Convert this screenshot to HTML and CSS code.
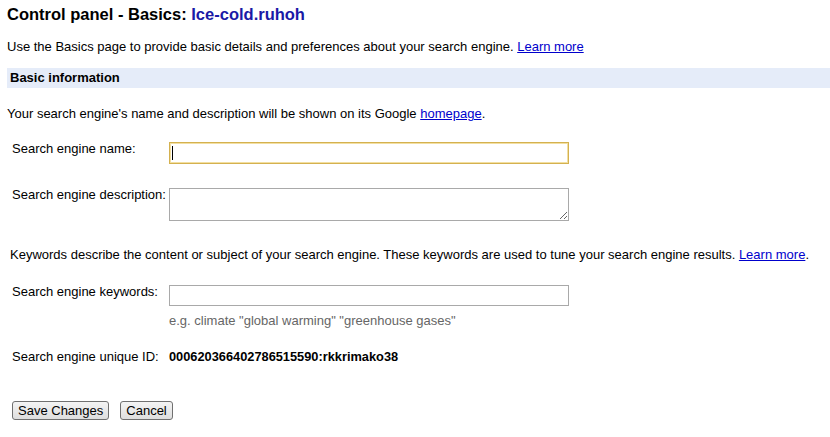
FILE: index.html
```html
<!DOCTYPE html>
<html>
<head>
<meta charset="utf-8">
<link rel="stylesheet" href="styles.css">
</head>
<body>
<div class="page">
  <h1 class="title">Control panel - Basics: <span class="engine">Ice-cold.ruhoh</span></h1>
  <p class="intro">Use the Basics page to provide basic details and preferences about your search engine. <a href="#">Learn more</a></p>
  <div class="section-bar">Basic information</div>
  <p class="note">Your search engine's name and description will be shown on its Google <a href="#">homepage</a>.</p>

  <div class="row row-name">
    <label class="label">Search engine name:</label>
    <div class="field-wrap">
      <input class="field field-focus" type="text">
      <span class="caret"></span>
    </div>
  </div>

  <div class="row row-desc">
    <label class="label">Search engine description:</label>
    <textarea class="field area"></textarea>
  </div>

  <p class="note note-kw">Keywords describe the content or subject of your search engine. These keywords are used to tune your search engine results. <a href="#">Learn more</a>.</p>

  <div class="row row-kw">
    <label class="label">Search engine keywords:</label>
    <input class="field field-kw" type="text">
  </div>
  <div class="hint">e.g. climate "global warming" "greenhouse gases"</div>

  <div class="row row-id">
    <span class="label">Search engine unique ID:</span>
    <span class="id-value">000620366402786515590:rkkrimako38</span>
  </div>

  <div class="buttons">
    <button class="btn">Save Changes</button>
    <button class="btn">Cancel</button>
  </div>
</div>
</body>
</html>
```

FILE: styles.css
```css
html, body {
  margin: 0;
  padding: 0;
  background: #fff;
}
body {
  font-family: Arial, "Liberation Sans", sans-serif;
  font-size: 13px;
  color: #000;
}
.page {
  padding-left: 7px;
}
.title {
  margin: 4px 0 0;
  font-size: 16.5px;
  line-height: 20px;
  font-weight: bold;
}
.engine {
  color: #1a1aa6;
}
a {
  color: #0000cc;
  text-decoration: underline;
}
.intro {
  margin: 15px 0 0;
  line-height: 16px;
}
.section-bar {
  margin-top: 13px;
  height: 20px;
  line-height: 20px;
  background: #e5ecf9;
  font-weight: bold;
  padding-left: 3px;
}
.note {
  margin: 18px 0 0;
  line-height: 16px;
}
.note-kw {
  margin-top: 26px;
  padding-left: 3px;
}
.row {
  display: flex;
  align-items: flex-start;
  padding-left: 5px;
}
.label {
  width: 157px;
  line-height: 13px;
  flex-shrink: 0;
}
.row-name { margin-top: 20px; }
.row-desc { margin-top: 24px; }
.row-kw { margin-top: 22px; }
.field-wrap {
  position: relative;
}
.field {
  box-sizing: border-box;
  width: 400px;
  margin: 0;
  font-family: Arial, "Liberation Sans", sans-serif;
  font-size: 13px;
  border: 1px solid #a9a9a9;
  background: #fff;
  outline: none;
}
.field-focus {
  height: 22px;
  border: 1px solid #d4b14f;
  box-shadow: inset 0 0 0 1px #f2dfa2;
}
.caret {
  position: absolute;
  left: 3px;
  top: 4px;
  width: 1px;
  height: 14px;
  background: #000;
}
.area {
  height: 33px;
  resize: both;
  display: block;
}
.field-kw {
  height: 21px;
}
.hint {
  margin-top: 7px;
  padding-left: 162px;
  line-height: 16px;
  color: #666;
}
.row-id {
  margin-top: 20px;
  align-items: center;
  line-height: 16px;
}
.row-id .label {
  line-height: 16px;
}
.id-value {
  font-weight: bold;
  font-size: 12.8px;
}
.buttons {
  margin-top: 36px;
  padding-left: 5px;
  display: flex;
  gap: 11px;
}
.btn {
  box-sizing: border-box;
  height: 19px;
  padding: 0 5px;
  font-family: Arial, "Liberation Sans", sans-serif;
  font-size: 13px;
  line-height: 15px;
  color: #000;
  border: 1px solid #707070;
  border-radius: 3px;
  background: linear-gradient(#f4f4f4, #dedede);
}
```
